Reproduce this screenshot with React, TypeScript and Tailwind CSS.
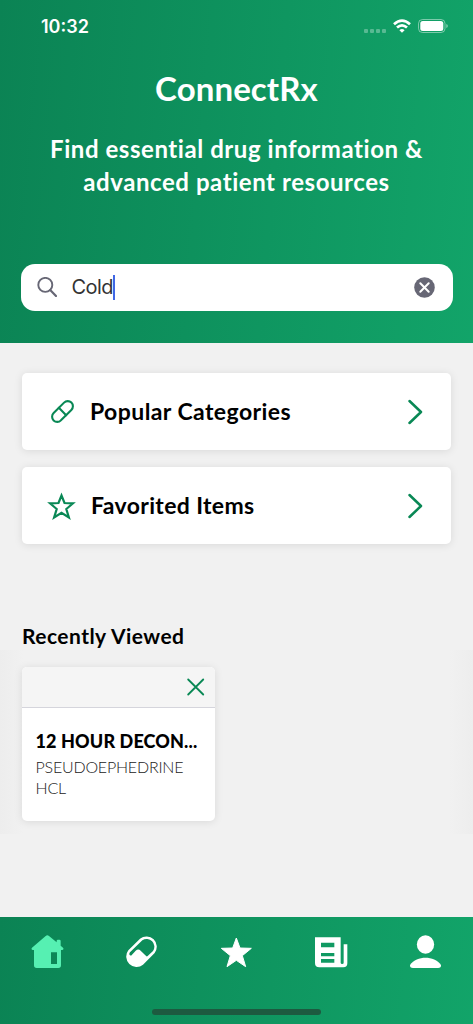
import { Pill } from 'lucide-react';
import React, { useState } from 'react';

const HomeIcon = () => (
  <svg viewBox="93 104 99 99" className="h-[33px] w-[33px]" fill="currentColor" fillRule="evenodd">
    <path d="M137 107q5-4 10 0l23 19v-4q0-4 4-4h4q4 0 4 4v14l7 6q4 5-2 7h-4v46q0 8-8 8h-65q-8 0-8-8v-46h-4q-6-2-2-7zM153 156v35h18v-35z" />
  </svg>
);

const PillIcon = () => (
  <svg viewBox="376 104 99 99" className="h-[33px] w-[33px]" fill="currentColor" fillRule="evenodd">
    <path d="M386 150L421 115A31 31 0 0 1 465 158L430 193A31 31 0 0 1 386 150ZM391 165Q387 161 391 156L428 120A23 23 0 0 1 460 152L444 167Q441 170 437 165L423 151Q416 144 408 151L397 163Q394 167 391 165Z" />
  </svg>
);

const StarIcon = () => (
  <svg viewBox="-49 -49 99 99" className="h-[33px] w-[33px]" fill="currentColor">
    <path
      d="M0-40L11-10L45-9L18 13L28 46L0 27L-28 46L-18 13L-45-9L-11-10Z"
      stroke="currentColor"
      strokeWidth="3"
      strokeLinejoin="round"
    />
  </svg>
);

const NewsIcon = () => (
  <svg viewBox="245 104 99 99" className="h-[33px] w-[33px]" fill="currentColor" fillRule="evenodd">
    <path d="M245 111h77v76q0 4 4.500 4t4.500-4v-55h11v57q0 12-12 12h-72q-13 0-13-13zM263 127v14h40v-14zM263 158v10h40v-10zM263 176v11h40v-11z" />
  </svg>
);

const UserIcon = () => (
  <svg viewBox="528 104 99 99" className="h-[33px] w-[33px]" fill="currentColor">
    <ellipse cx="577.500" cy="132.500" rx="26" ry="28" />
    <path d="M531 194C541 178 560 172 577.500 172S614 178 624 194Q625 203 615 203H540Q530 203 531 194Z" />
  </svg>
);

const tabs = [
  { id: 'home', Icon: HomeIcon },
  { id: 'drugs', Icon: PillIcon },
  { id: 'favorites', Icon: StarIcon },
  { id: 'news', Icon: NewsIcon },
  { id: 'profile', Icon: UserIcon },
];

const StatusBar = () => (
  <div className="flex h-[52px] items-center justify-between pr-[25px] pl-[41px] text-white">
    <span className="mt-[2px] font-['Inter',sans-serif] text-[18px] leading-6 font-semibold">10:32</span>
    <div className="flex items-center">
      <div className="mt-[9px] mr-[7px] flex gap-[2px] opacity-30">
        <span className="h-1 w-1 rounded-[1px] bg-white" />
        <span className="h-1 w-1 rounded-[1px] bg-white" />
        <span className="h-1 w-1 rounded-[1px] bg-white" />
        <span className="h-1 w-1 rounded-[1px] bg-white" />
      </div>
      <svg viewBox="0 0 18 14" className="mr-[7px] h-[14px] w-[18px]" fill="none" stroke="#fff" strokeWidth="2.700">
        <path d="M1 5.200Q9-2 17 5.200" />
        <path d="M4 8.600Q9 4.200 14 8.600" />
        <path d="M6.400 11.200Q9 9 11.600 11.200L9 13.800Z" fill="#fff" stroke="none" />
      </svg>
      <svg viewBox="0 0 30 14" className="h-[14px] w-[30px]">
        <rect x="0.500" y="0.500" width="26.500" height="13" rx="4" fill="none" stroke="#fff" strokeOpacity="0.450" />
        <rect x="2.300" y="2.100" width="23" height="9.800" rx="2.500" fill="#fff" />
        <path d="M28.300 5v4q1.500-.5 1.500-2t-1.500-2" fill="#fff" fillOpacity="0.500" />
      </svg>
    </div>
  </div>
);

const Chevron = () => (
  <svg viewBox="0 0 16 26" className="h-[26px] w-4" fill="none" stroke="#098855" strokeWidth="2.500" strokeLinecap="round" strokeLinejoin="round">
    <path d="M1.500 2L13 13L1.500 24" />
  </svg>
);

const App: React.FC = () => {
  const [query, setQuery] = useState('Cold');
  const [activeTab, setActiveTab] = useState('home');

  return (
    <div className="flex h-[1024px] w-[473px] flex-col overflow-hidden bg-[#f1f1f1] font-['Lato',sans-serif]">
      {/* Header */}
      <header className="h-[343px] shrink-0 bg-linear-[95deg,#0b8354,#12a469] text-white">
        <StatusBar />
        <h1 className="mt-[15px] text-center text-[33px] leading-[42px] font-bold tracking-[0.1px]">ConnectRx</h1>
        <p className="mt-[23px] text-center text-[24px] leading-[33px] font-bold tracking-[0.56px]">
          Find essential drug information &amp;
          <br />
          advanced patient resources
        </p>

        {/* Search */}
        <div className="mx-[20.500px] mt-[65.500px] flex h-[47.500px] items-center rounded-[14px] bg-white pr-[18px] pl-[16px]">
          <svg viewBox="0 0 20 20" className="h-5 w-5" fill="none" stroke="#676775" strokeWidth="1.900">
            <circle cx="8.300" cy="7.900" r="7" />
            <path d="M13.200 13L19 19" strokeWidth="2.200" strokeLinecap="round" />
          </svg>
          <div className="ml-[15px] flex flex-1 items-center">
            <span className="font-['Inter',sans-serif] text-[20px] leading-6 tracking-[-0.6px] text-[#333]">{query}</span>
            <span className="h-[25px] w-[2px] bg-[#4167e5]" />
          </div>
          <button onClick={() => setQuery('')}>
            <svg viewBox="0 0 20 20" className="h-[21px] w-[21px]">
              <circle cx="10" cy="10" r="9.800" fill="#676775" />
              <path d="M6 6L14 14M14 6L6 14" stroke="#fff" strokeWidth="1.900" strokeLinecap="round" />
            </svg>
          </button>
        </div>
      </header>

      <main className="flex flex-1 flex-col pt-[30px]">
        {/* Shortcuts */}
        <div className="mx-[22px] flex flex-col gap-[17px] text-black">
          <button className="flex h-[77px] items-center rounded-[5px] bg-white pr-[27px] pl-[28px] shadow-[0_1px_8px_rgba(0,0,0,0.1)]">
            <Pill size={25} strokeWidth={2} color="#098855" />
            <span className="-mt-px ml-[15px] flex-1 text-left text-[23px] font-bold tracking-[0.42px]">Popular Categories</span>
            <Chevron />
          </button>
          <button className="flex h-[77px] items-center rounded-[5px] bg-white pr-[27px] pl-[25px] shadow-[0_1px_8px_rgba(0,0,0,0.1)]">
            <svg viewBox="0 0 29 28" className="h-7 w-[29px]" fill="none" stroke="#098855" strokeWidth="2.200">
              <path d="M14.500 3.500L17.500 11L26 11.300L19.300 17L21.900 25.500L14.500 20.800L7.100 25.500L9.700 17L3 11.300L11.500 11Z" />
            </svg>
            <span className="ml-[15px] flex-1 text-left text-[23px] font-bold tracking-[0.35px]">Favorited Items</span>
            <Chevron />
          </button>
        </div>

        {/* Recently viewed */}
        <h2 className="mt-[77px] ml-[22px] h-[29px] text-[21px] leading-[29px] font-bold tracking-[0.46px] text-black">Recently Viewed</h2>
        <div className="h-[184px] bg-[linear-gradient(90deg,#ededed,#f1f1f1_5%,#f1f1f1_95%,#ededed)] px-[22px] pt-[17px]">
          <div className="h-[154px] w-[193px] overflow-hidden rounded-[5px] bg-white shadow-[0_1px_8px_rgba(0,0,0,0.1)]">
            <div className="flex h-[41px] items-center justify-end border-b border-[#d5d5dc] bg-[#f5f5f5] pr-[10px]">
              <svg viewBox="0 0 18 18" className="h-[18px] w-[18px]" fill="none" stroke="#098855" strokeWidth="1.800" strokeLinecap="round">
                <path d="M1.200 1.500L16.200 16.500M16.200 1.500L1.200 16.500" />
              </svg>
            </div>
            <div className="px-[13.500px] pt-[21px]">
              <p className="text-[18px] leading-[25px] font-black tracking-[0.13px] whitespace-nowrap text-black">12 HOUR DECON...</p>
              <p className="mt-[2px] text-[16px] leading-[21px] font-light tracking-[-0.2px] text-[#222]">PSEUDOEPHEDRINE HCL</p>
            </div>
          </div>
        </div>
      </main>

      {/* Tab bar */}
      <nav className="flex h-[107px] shrink-0 flex-col items-center justify-between bg-linear-[95deg,#0b8354,#12a469] pt-[18px] pb-[9px]">
        <div className="flex w-full">
          {tabs.map(({ id, Icon }) => (
            <button
              key={id}
              onClick={() => setActiveTab(id)}
              className={`flex flex-1 justify-center ${activeTab === id ? 'text-[#56f0b2]' : 'text-white'}`}
            >
              <Icon />
            </button>
          ))}
        </div>
        <div className="h-[6px] w-[169px] rounded-full bg-[#1d5a40]" />
      </nav>
    </div>
  );
};

export default App;
